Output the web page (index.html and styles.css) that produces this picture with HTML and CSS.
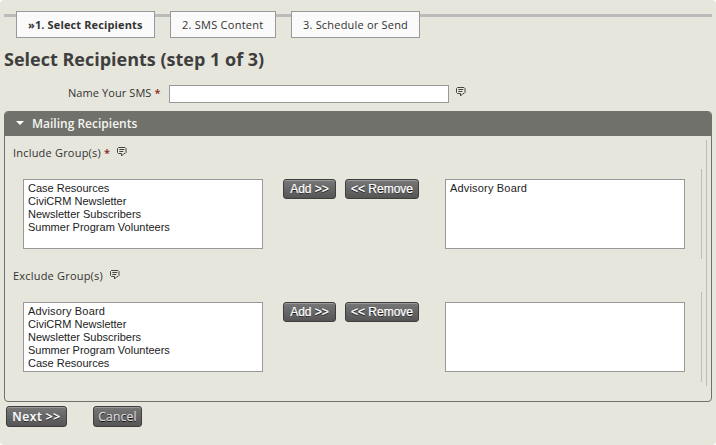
FILE: index.html
```html
<!DOCTYPE html>
<html lang="en">
<head>
<meta charset="utf-8">
<title>Select Recipients</title>
<link rel="stylesheet" href="styles.css">
</head>
<body>
<svg class="defs" width="0" height="0">
  <symbol id="help" viewBox="0 0 10 10">
    <path d="M1.500.5h6.500l1 1v4l-1 1H7L4.500 9V6.500h-3l-1-1v-4z" fill="none" stroke="#45453f"/>
    <path d="M2.300 2.500h5M2.300 4.500h4" fill="none" stroke="#45453f"/>
  </symbol>
</svg>
<main>
<ol class="steps">
  <li class="step current"><span>»1. Select Recipients</span></li>
  <li class="step content"><span>2. SMS Content</span></li>
  <li class="step schedule"><span>3. Schedule or Send</span></li>
</ol>
<h1><span>Select Recipients (step 1 of 3)</span></h1>
<form>
  <div class="name-row">
    <label for="name">Name Your SMS <b class="required">*</b></label>
    <input id="name" type="text">
    <svg class="help"><use href="#help"/></svg>
  </div>
  <section class="panel">
    <h2><i class="arrow"></i><span>Mailing Recipients</span></h2>
    <div class="panel-body">
      <div class="label"><span>Include Group(s) <b class="required">*</b></span><svg class="help"><use href="#help"/></svg></div>
      <div class="picker">
        <ul class="list"><li>Case Resources</li><li>CiviCRM Newsletter</li><li>Newsletter Subscribers</li><li>Summer Program Volunteers</li></ul>
        <button type="button" class="add">Add &gt;&gt;</button>
        <button type="button" class="remove">&lt;&lt; Remove</button>
        <ul class="list"><li class="wide">Advisory Board</li></ul>
      </div>
      <div class="label second"><span>Exclude Group(s)</span><svg class="help"><use href="#help"/></svg></div>
      <div class="picker">
        <ul class="list"><li class="wide">Advisory Board</li><li>CiviCRM Newsletter</li><li>Newsletter Subscribers</li><li>Summer Program Volunteers</li><li>Case Resources</li></ul>
        <button type="button" class="add">Add &gt;&gt;</button>
        <button type="button" class="remove">&lt;&lt; Remove</button>
        <ul class="list"></ul>
      </div>
    </div>
  </section>
  <div class="actions">
    <button type="button" class="next">Next &gt;&gt;</button>
    <button type="button" class="cancel">Cancel</button>
  </div>
</form>
</main>
</body>
</html>
```
FILE: styles.css
```css
* { box-sizing: border-box; }
body {
  margin: 0;
  background: #fff;
  color: #333;
  font: 11px/14px "Open Sans", "Noto Sans", sans-serif;
}
main {
  height: 445px;
  padding: 11px 4px 0;
  overflow: hidden;
  border-radius: 4px;
  background: #e6e6dd;
}
.defs { position: absolute; }
ul, ol { list-style: none; margin: 0; padding: 0; }
.steps {
  display: flex;
  gap: 15px;
  padding-left: 12px;
  background: linear-gradient(#bbb, #bbb) 0 3px / 100% 3px no-repeat;
}
.step {
  height: 27px;
  padding-left: 11px;
  border: 1px solid #999;
  background: #fafafa;
  line-height: 26px;
  white-space: nowrap;
}
.current { width: 139px; font-weight: 700; letter-spacing: .13px; }
.content { width: 106px; letter-spacing: .25px; }
.schedule { width: 129px; letter-spacing: .2px; }
h1 {
  height: 47px;
  margin: 0;
  color: #3e3e3e;
  font-size: 18px;
  line-height: 43px;
  white-space: nowrap;
}
.name-row { display: flex; height: 18px; }
.name-row label { width: 165px; padding-left: 64px; line-height: 15px; letter-spacing: .08px; white-space: nowrap; }
.name-row input { width: 280px; height: 18px; padding: 0 4px; border: 1px solid #999; background: #fff; }
.name-row .help { margin: 2px 0 0 7px; }
.required { color: #8a1f11; font-weight: 600; }
.help { display: block; flex: none; width: 10px; height: 10px; }
.panel {
  width: 708px;
  height: 291px;
  margin-top: 8px;
  border: 1px solid #70716b;
  border-radius: 4px;
  overflow: hidden;
}
h2 {
  display: flex;
  align-items: center;
  height: 24px;
  margin: 0 0 4px;
  padding-left: 11px;
  background: #70716b;
  color: #f5f6f1;
  font-size: 12px;
  font-weight: 600;
}
.arrow {
  margin: -2px 8px 0 0;
  border: 4px solid transparent;
  border-top: 4px solid #fff;
  border-bottom: 0;
}
.panel-body { width: 702px; height: 246px; padding-left: 8px; border-right: 1px solid #bcbdb4; }
.label { display: flex; height: 29px; padding-top: 6px; letter-spacing: .2px; }
.label .help { margin: 1px 0 0 7px; }
.label.second { height: 33px; padding-top: 10px; }
.label.second .help { margin-top: 1px; }
.picker {
  display: flex;
  align-items: flex-start;
  width: 689px;
  height: 90px;
  padding: 10px 0 0 10px;
  border-right: 1px solid #bcbdb4;
}
.list {
  width: 240px;
  height: 70px;
  padding: 2px 4px;
  border: 1px solid #999;
  background: #fff;
  color: #222;
  font: 11px/13px "Liberation Sans", sans-serif;
}
.wide { letter-spacing: .18px; }
button {
  height: 20px;
  padding: 0;
  border: 1px solid #3e3e3e;
  border-radius: 3px;
  background: linear-gradient(#777, #555);
  box-shadow: inset 0 1px #999;
  color: #fff;
  font: 12px/18px "Liberation Sans", sans-serif;
  text-shadow: 0 1px 0 #111;
  -webkit-text-stroke: .25px #fff;
}
.add { width: 53px; margin-left: 20px; }
.remove { width: 74px; margin: 0 26px 0 9px; }
.actions { display: flex; gap: 26px; padding: 4px 0 0 2px; }
.actions button { height: 21px; font: 12px/17px "Open Sans", sans-serif; }
.actions .next { width: 61px; font-weight: 600; letter-spacing: .55px; }
.actions .cancel { width: 49px; color: #ddd; letter-spacing: .2px; -webkit-text-stroke: .2px #ddd; }
```
